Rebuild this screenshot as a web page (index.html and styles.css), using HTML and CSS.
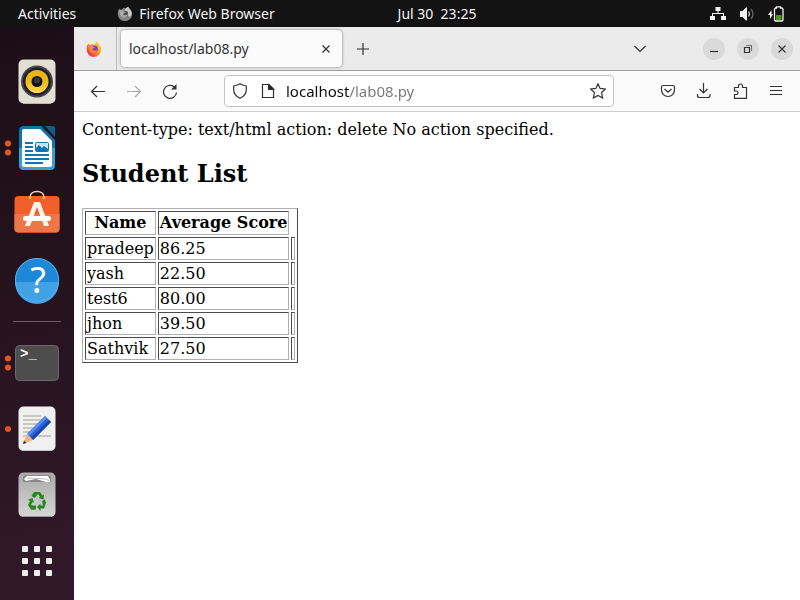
FILE: index.html
```html
<!DOCTYPE html>
<html lang="en">
<head>
<meta charset="utf-8">
<title>localhost/lab08.py</title>
<link rel="stylesheet" href="styles.css">
</head>
<body>
<header class="topbar">
  <div class="topbar-left">
    <button class="top-item">Activities</button>
    <button class="top-item app-menu">
      <svg width="16" height="16" viewBox="0 0 16 16" aria-hidden="true">
        <path d="M1 5L2.500 2.500L4 4L7 1.500L9 4L11 .5L14.500 5C16.500 10 13 15 8 15S0 11 1 5Z" fill="#858585"/>
        <path d="M7.500 3L11 .8L14 5Q15.500 8 13 11L10 9Z" fill="#c8c8c8"/>
        <circle cx="8" cy="8" r="3.200" fill="#4c4c4c"/>
        <path d="M2 5Q5 3.500 7 5.500L9 6L6 8Q7 10.500 11 8Q10 12 6 11.500Q3 10 2 5Z" fill="#aaa"/>
      </svg>
      <span>Firefox Web Browser</span>
    </button>
  </div>
  <button class="top-item clock">Jul 30&nbsp; 23:25</button>
  <div class="tray">
    <svg width="16" height="14" viewBox="0 0 16 14" aria-label="Network">
      <path d="M5.500 0h5v4h-2v2H14v3h2v4h-5V9h2V7H3v2h2v4H0V9h2V6h5.500V4h-2z" fill="#f2f2f2"/>
    </svg>
    <svg width="16" height="14" viewBox="0 0 16 14" aria-label="Volume">
      <path d="M1 4h2.500L7 .5H8v13H7L3.500 10H1z" fill="#f2f2f2"/>
      <path d="M9.500 4.500q2 2.500 0 5" fill="none" stroke="#bbb" stroke-width="1.300"/>
      <path d="M12 2q4 5 0 10" fill="none" stroke="#666" stroke-width="1.300"/>
    </svg>
    <svg width="16" height="16" viewBox="0 0 16 16" aria-label="Battery">
      <path d="M3.500 4L0 9h2v4L5 8H3.500z" fill="#f2f2f2"/>
      <path d="M8.500 2V.8h4V2H14l1 1v11l-1 1H7.500l-1-1V3l1-1z" fill="none" stroke="#f2f2f2" stroke-width="1.300"/>
      <path d="M8 9h5.500v5H8z" fill="#4e9a06"/>
    </svg>
  </div>
</header>
<div class="desktop">
  <nav class="dock" aria-label="Dock">
    <button class="launcher" aria-label="Rhythmbox">
      <svg viewBox="0 0 74 66">
        <defs><linearGradient id="cone" x2="0" y2="1"><stop stop-color="#e8b210"/><stop offset=".5" stop-color="#ecbb1c"/><stop offset="1" stop-color="#ffd84f"/></linearGradient></defs>
        <rect x="18.500" y="10.500" width="37" height="44" rx="5" fill="#e3dfd3"/>
        <path d="M23 54.500h28" stroke="#bdb8ac"/>
        <circle cx="37" cy="32.500" r="16" fill="#45454d"/>
        <circle cx="37" cy="32.500" r="14" fill="#1e1f29"/>
        <circle cx="37" cy="32.500" r="11.500" fill="url(#cone)"/>
        <circle cx="37" cy="32.500" r="5.500" fill="#111"/>
        <circle cx="37" cy="31.500" r="3" fill="#383838"/>
      </svg>
    </button>
    <button class="launcher" aria-label="LibreOffice Writer">
      <svg viewBox="0 0 74 66">
        <g fill="#e95420"><circle cx="8" cy="28.500" r="3"/><circle cx="8" cy="37.500" r="3"/></g>
        <path d="M24 11H41L55 25V50q0 5-5 5H24q-5 0-5-5V16q0-5 5-5z" fill="#1273ab"/>
        <path d="M19 33H55V50q0 5-5 5H24q-5 0-5-5z" fill="#36a0d4"/>
        <path d="M24 14H40L52 26V50q0 2-2 2H24q-2 0-2-2V16q0-2 2-2z" fill="#fff"/>
        <path d="M45 11H53q2 0 2 2V22z" fill="#0e5f8f"/>
        <path d="M25 28h8M25 32h8M25 36h8M25 40h24M25 44h24M25 48h18" stroke="#1274b0" stroke-width="2"/>
        <rect x="35.500" y="27.500" width="13" height="9" rx="1" fill="#c3e6f8" stroke="#1274b0"/>
        <path d="M36 36V33l3-3 3 3 2-2 4 3v2z" fill="#1274b0"/>
      </svg>
    </button>
    <button class="launcher" aria-label="Ubuntu Software">
      <svg viewBox="0 0 74 66">
        <rect x="14.500" y="15" width="45" height="36.500" rx="4" fill="#f1602a"/>
        <path d="M14.500 33H59.500V47.500q0 4-4 4H18.500q-4 0-4-4z" fill="#ee7748"/>
        <path d="M30 18V16c0-7.500 14-7.500 14 0v2" fill="none" stroke="#f5dcb5" stroke-width="1.500"/>
        <path d="M34 21H40L49 45H44L37 26L30 45H25z" fill="#fff4ee"/>
        <rect x="23" y="35" width="28" height="5" rx="2.500" fill="#fff"/>
      </svg>
    </button>
    <button class="launcher" aria-label="Help">
      <svg viewBox="0 0 74 66">
        <circle cx="37" cy="33" r="22" fill="#1f87d8"/>
        <path d="M15 35H59A22 22 0 0 1 15 35z" fill="#40a2e4"/>
        <circle cx="37" cy="33" r="21.500" fill="none" stroke="#58afea"/>
        <text x="38" y="46" text-anchor="middle" class="help-mark">?</text>
      </svg>
    </button>
    <hr class="dock-rule">
    <button class="launcher" aria-label="Terminal">
      <svg viewBox="0 0 74 66">
        <g fill="#e95420"><circle cx="8" cy="28.500" r="3"/><circle cx="8" cy="37.500" r="3"/></g>
        <rect x="15.500" y="15.500" width="43" height="35" rx="4" fill="#4d4d4d" stroke="#686868"/>
        <text x="20" y="28" class="prompt">&gt;_</text>
      </svg>
    </button>
    <button class="launcher" aria-label="Text Editor">
      <svg viewBox="0 0 74 66">
        <circle cx="8" cy="33" r="3" fill="#e95420"/>
        <rect x="18.500" y="10.500" width="37" height="44.500" rx="5" fill="#f0f0f0"/>
        <path d="M23 54.500h28" stroke="#c4c4c4"/>
        <path d="M23 20h18M23 24h26M23 28h21M23 32h18M23 36h15M23 40h28" stroke="#c9c6bb" stroke-width="2"/>
        <path d="M45 20L51 26L33 44L27 38z" fill="#2b62d8"/>
        <path d="M45 20L47 22L29 40L27 38z" fill="#5b8cf0"/>
        <path d="M49 24L51 26L33 44L31 42z" fill="#1746aa"/>
        <path d="M27 38L33 44L23 48z" fill="#f2b27c"/>
        <path d="M24 44.500L26.500 47L23 48z" fill="#333"/>
      </svg>
    </button>
    <button class="launcher" aria-label="Trash">
      <svg viewBox="0 0 74 66">
        <defs><linearGradient id="bin" x2="0" y2="1"><stop stop-color="#aaa"/><stop offset="1" stop-color="#d6d6d6"/></linearGradient></defs>
        <rect x="18.500" y="10.500" width="37" height="44.500" rx="5" fill="url(#bin)"/>
        <path d="M23 54.500h28" stroke="#999"/>
        <path d="M23 20V16q0-3 3-3H48q3 0 3 3v4z" fill="#888"/>
        <path d="M24 17L27 14H48L50 18V20H46L36 17L26 19z" fill="#fff"/>
        <path d="M27 16L46 17L49 19" fill="none" stroke="#bbb"/>
        <g fill="#26871f">
          <path d="M31.500 34L34 30H40L42.500 33.500L44 32.500L43.500 37.500L38.500 36L40 35L38 32L34.500 36z"/>
          <path d="M28 37.500L32.500 36L34 41L32.500 40L31 43L34 45V47.500H31L28 43L30 39z"/>
          <path d="M42 39L45 37.500L46 41L44 46.500H40.500V49L37 45L40.500 41.500V43.500H43z"/>
          <path d="M31 43.500H36V47.500H31z"/>
        </g>
      </svg>
    </button>
    <button class="launcher" aria-label="Show Applications">
      <svg viewBox="0 0 74 66" fill="#eee">
        <rect x="22" y="18" width="6" height="6" rx="1"/><rect x="34" y="18" width="6" height="6" rx="1"/><rect x="46" y="18" width="6" height="6" rx="1"/>
        <rect x="22" y="30" width="6" height="6" rx="1"/><rect x="34" y="30" width="6" height="6" rx="1"/><rect x="46" y="30" width="6" height="6" rx="1"/>
        <rect x="22" y="42" width="6" height="6" rx="1"/><rect x="34" y="42" width="6" height="6" rx="1"/><rect x="46" y="42" width="6" height="6" rx="1"/>
      </svg>
    </button>
  </nav>
  <section class="browser">
    <div class="tabs">
      <button class="view" aria-label="Firefox View">
        <svg width="16" height="16" viewBox="0 0 16 16">
          <defs><linearGradient id="fox" x1="1" x2="0" y2="1"><stop stop-color="#ffe93c"/><stop offset=".45" stop-color="#ff9a22"/><stop offset=".75" stop-color="#fc4048"/><stop offset="1" stop-color="#e5237b"/></linearGradient></defs>
          <path d="M1 4.500L2.500 2.500L4 4L6.500 3L9 4Q9 1.500 11 .3Q12 3 14 4.500C17.500 10 13 16 8 16S-.5 11 1 4.500Z" fill="url(#fox)"/>
          <circle cx="8.500" cy="8" r="3.400" fill="#7b40d8"/>
          <path d="M2 5Q5 4 7 5.500L9 6.500L6 8Q7 11 11.500 9Q10 12.500 6 12Q2.500 10 2 5Z" fill="#ff8b25"/>
        </svg>
      </button>
      <div class="tab">
        <span class="tab-title">localhost/lab08.py</span>
        <button class="icon" aria-label="Close tab"><svg width="8" height="8" viewBox="0 0 8 8"><path d="M.5 .5L7.500 7.500M7.500 .5L.5 7.500"/></svg></button>
      </div>
      <button class="icon new-tab" aria-label="New tab"><svg width="12" height="12" viewBox="0 0 12 12"><path d="M6 0V12M0 6H12"/></svg></button>
      <button class="icon all-tabs" aria-label="List all tabs"><svg width="12" height="8" viewBox="0 0 12 8"><path d="M.5 1L6 6.500L11.500 1"/></svg></button>
      <div class="window-buttons">
        <button class="round" aria-label="Minimize"><svg width="12" height="12" viewBox="0 0 12 12"><path d="M2 8.500h8"/></svg></button>
        <button class="round" aria-label="Restore"><svg width="12" height="12" viewBox="0 0 12 12"><path d="M2.500 4.500h5v5h-5z"/><path d="M4 2.500h5.500V8" opacity=".6"/></svg></button>
        <button class="round" aria-label="Close"><svg width="12" height="12" viewBox="0 0 12 12"><path d="M2.500 2.500L9.500 9.500M9.500 2.500L2.500 9.500"/></svg></button>
      </div>
    </div>
    <div class="toolbar">
      <div class="nav-buttons">
        <button class="icon" aria-label="Back"><svg width="16" height="16" viewBox="0 0 16 16"><path d="M15 8.500H1.500M7 3L1.500 8.500L7 14"/></svg></button>
        <button class="icon" aria-label="Forward" disabled><svg width="16" height="16" viewBox="0 0 16 16"><path d="M1 8.500H14.500M9 3L14.500 8.500L9 14"/></svg></button>
        <button class="icon" aria-label="Reload"><svg width="16" height="16" viewBox="0 0 16 16"><path d="M14.500 9.500A6.500 6.500 0 1 1 12 3.700L13.500 5"/><path d="M14.500 1V6.500H9z" fill="#333" stroke="none"/></svg></button>
      </div>
      <div class="address">
        <svg width="16" height="16" viewBox="0 0 16 16"><path d="M8 .8C10 2.300 12.500 2.700 14.300 3V6.500C14.300 11 11 14 8 15.300C5 14 1.700 11 1.700 6.500V3C3.500 2.700 6 2.300 8 .8Z"/></svg>
        <svg width="16" height="16" viewBox="0 0 16 16"><path d="M2.500 1.500H9L13.500 6V14.500H2.500Z"/><path d="M8.500 1.500V6.500H13.500Z" fill="#222"/></svg>
        <input class="url" type="text" value="localhost/lab08.py" aria-label="Address" spellcheck="false">
        <button class="icon" aria-label="Bookmark"><svg width="16" height="16" viewBox="0 0 16 16"><path d="M8 .8L10.100 5.400L15.300 6L11.600 9.500L12.600 15L8 12.400L3.400 15L4.400 9.500L.7 6L5.900 5.400Z"/></svg></button>
      </div>
      <div class="actions">
        <button class="icon" aria-label="Pocket"><svg width="16" height="16" viewBox="0 0 16 16"><path d="M3 2.500H13Q14.500 2.500 14.500 4V7A6.500 6.500 0 0 1 1.500 7V4Q1.500 2.500 3 2.500ZM4.500 6L8 9.300L11.500 6"/></svg></button>
        <button class="icon" aria-label="Downloads"><svg width="16" height="16" viewBox="0 0 16 16"><path d="M7.500 0V10M3.500 6L7.500 10L11.500 6M1.500 11V12.500Q1.500 14.500 3.500 14.500H12Q14 14.500 14 12.500V11"/></svg></button>
        <button class="icon" aria-label="Extensions"><svg width="16" height="16" viewBox="0 0 16 16"><path d="M2.500 4.500H6.500V3Q6.500 1 8.500 1T10.500 3V4.500H14.500V15.300H2.500V11.500H4Q6 11.500 6 9.700T4 8H2.500Z"/></svg></button>
        <button class="icon" aria-label="Menu"><svg width="16" height="16" viewBox="0 0 16 16"><path d="M2 3.500H14M2 7.500H14M2 11.500H14"/></svg></button>
      </div>
    </div>
    <main class="page">
      Content-type: text/html action: delete No action specified.
      <h2>Student List</h2>
      <table class="scores">
        <tr><th>Name</th><th>Average Score</th></tr>
        <tr><td>pradeep</td><td>86.25</td><td></td></tr>
        <tr><td>yash</td><td>22.50</td><td></td></tr>
        <tr><td>test6</td><td>80.00</td><td></td></tr>
        <tr><td>jhon</td><td>39.50</td><td></td></tr>
        <tr><td>Sathvik</td><td>27.50</td><td></td></tr>
      </table>
    </main>
  </section>
</div>
</body>
</html>
```
FILE: styles.css
```css
* { box-sizing: border-box; }
body {
  margin: 0;
  min-height: 100vh;
  display: flex;
  flex-direction: column;
  font: 14px/20px "Noto Sans", "Open Sans", sans-serif;
}
button {
  margin: 0;
  padding: 0;
  border: 0;
  background: none;
  font: inherit;
  color: inherit;
}
svg { display: block; flex: none; }

/* The clock is centred over the area right of the dock. */
.topbar {
  display: grid;
  grid-template-columns: 74px 1fr auto 1fr;
  align-items: center;
  height: 27px;
  background: #131313;
  color: #f2f2f2;
}
.topbar-left { grid-column: 1 / 3; display: flex; gap: 41px; padding-left: 18px; }
.top-item { white-space: nowrap; }
.app-menu { display: flex; align-items: center; gap: 6px; }
.tray { display: flex; justify-content: flex-end; align-items: center; gap: 13px; padding-right: 16px; }

.desktop { flex: 1; display: flex; }
.dock {
  width: 74px;
  flex: none;
  padding-top: 22px;
  background: linear-gradient(170deg, #1c0e17, #26131e 50%, #32192a);
}
.launcher { display: block; width: 100%; height: 66px; }
.launcher svg { width: 74px; height: 66px; }
.dock-rule { margin: 8px 13px; height: 1px; border: 0; background: #6b5c66; }
.help-mark { font: 36px "Noto Sans", sans-serif; fill: #fff; }
.prompt { font: bold 14px "Liberation Mono", monospace; fill: #fff; }

.browser { flex: 1; min-width: 0; display: flex; flex-direction: column; background: #fff; }
.tabs {
  display: flex;
  align-items: center;
  height: 44px;
  background: #ebebeb;
  border-bottom: 1px solid #9f9f9f;
  color: #333;
}
.view {
  align-self: stretch;
  width: 43px;
  display: grid;
  place-items: center;
  padding-right: 3px;
  border-right: 1px solid #b8b8b8;
}
.tab {
  display: flex;
  align-items: center;
  justify-content: space-between;
  width: 221px;
  height: 37px;
  margin-left: 4px;
  padding: 0 12px 0 8px;
  border-radius: 4px;
  background: #fbfbfb;
  box-shadow: 0 0 3px rgba(0, 0, 0, .5);
}
.icon { display: grid; place-items: center; }
.icon svg, .address svg, .round svg { fill: none; stroke: #333; stroke-width: 1.2; }
.icon:disabled { opacity: .4; }
.new-tab { margin-left: 15px; }
.all-tabs { margin-left: auto; }
.window-buttons { display: flex; gap: 12px; margin: 0 7px 0 57px; }
.round {
  width: 22px;
  height: 22px;
  border-radius: 50%;
  background: #dadada;
  display: grid;
  place-items: center;
}

.toolbar {
  display: flex;
  align-items: center;
  height: 41px;
  padding: 0 16px;
  background: #fbfbfb;
  border-bottom: 1px solid #ccc;
}
.nav-buttons, .actions { display: flex; gap: 20px; }
.address {
  flex: 1;
  display: flex;
  align-items: center;
  gap: 12px;
  height: 32px;
  margin: 0 46px;
  padding: 0 7px;
  border: 1px solid #c4c4c4;
  border-radius: 4px;
  background: #fff;
}
.url {
  flex: 1;
  min-width: 0;
  height: 24px;
  margin-left: -2px;
  padding: 0;
  border: 0;
  outline: 0;
  font: inherit;
  font-size: 15px;
  color: transparent;
  background: linear-gradient(to right, #0c0c0c 64px, #777 64px);
  -webkit-background-clip: text;
  background-clip: text;
}

.page {
  flex: 1;
  padding: 8px;
  font: 16px/19px "DejaVu Serif", serif;
  color: #000;
}
.page h2 { margin: 21px 0 20px; font-size: 24px; line-height: 28px; }
.scores { border: 1px solid; border-color: #b0b0b0 #4c4c4c #4c4c4c #b0b0b0; border-spacing: 2px; }
.scores th, .scores td {
  padding: 1px;
  border: 1px solid;
  border-color: #4c4c4c #b0b0b0 #b0b0b0 #4c4c4c;
}
.scores th { line-height: 20px; }
```
